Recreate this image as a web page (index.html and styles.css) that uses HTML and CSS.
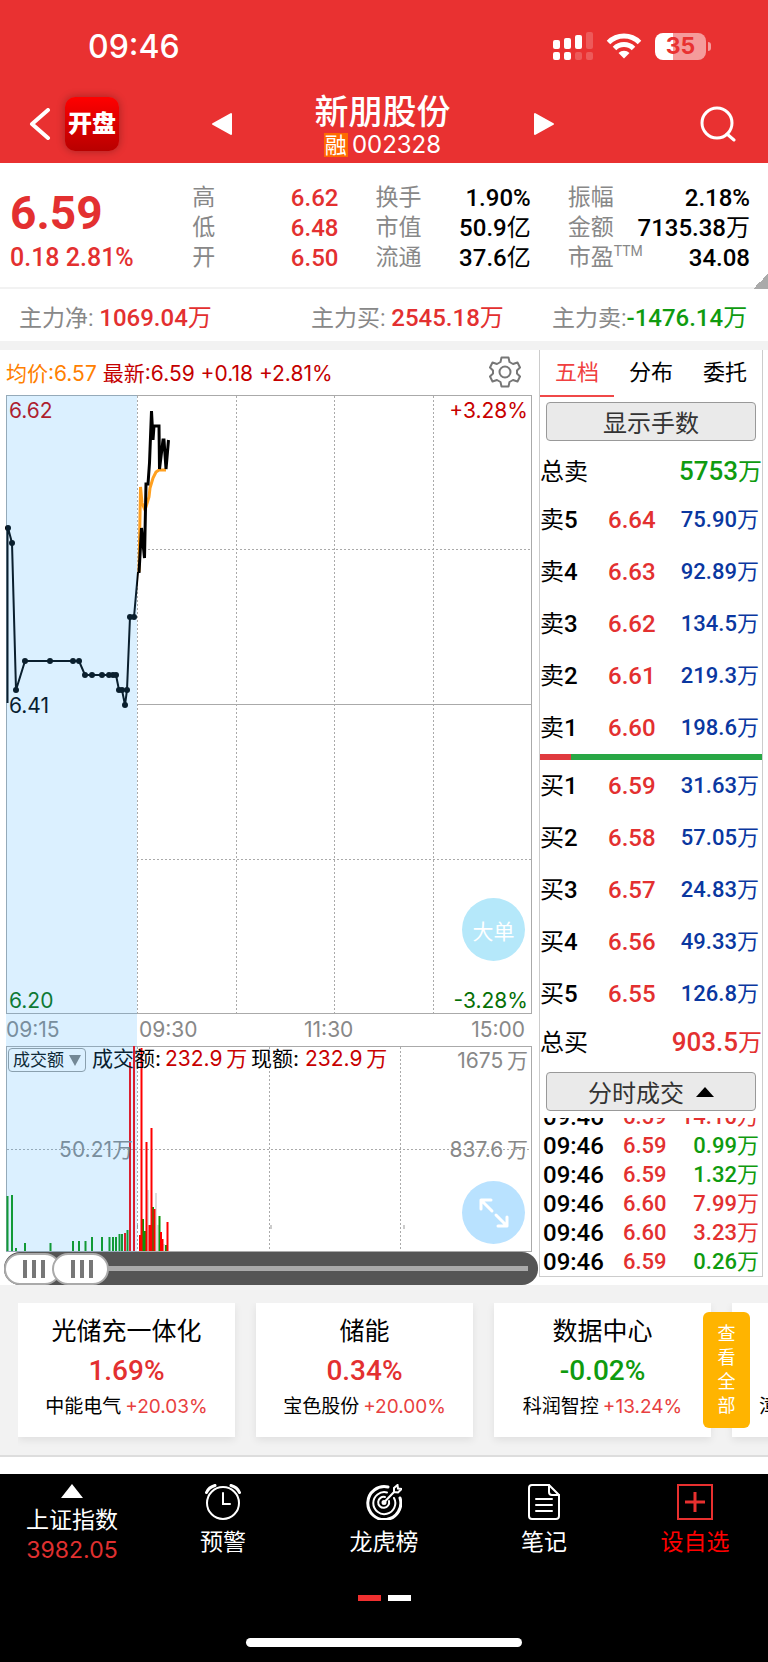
FILE: index.html
```html
<!DOCTYPE html>
<html lang="zh-CN">
<head>
  <meta charset="UTF-8">
  <meta name="viewport" content="width=device-width, initial-scale=1.0">
  <title>新朋股份 002328</title>
  <link rel="stylesheet" href="styles.css">
</head>
<body>
  <header class="top">
    <div class="status-bar">
      <span class="clock">09:46</span>
      <div class="status-icons">
        <svg width="40" height="28" viewBox="0 0 40 28" fill="#fff">
          <rect x="0" y="8" width="7" height="9" rx="2"/>
          <rect x="11" y="6" width="7" height="11" rx="2"/>
          <rect x="22" y="3" width="7" height="14" rx="2"/>
          <rect x="33" y="0" width="7" height="17" rx="2" opacity=".2"/>
          <rect x="0" y="20" width="7" height="8" rx="2"/>
          <rect x="11" y="20" width="7" height="8" rx="2"/>
          <rect x="22" y="20" width="7" height="8" rx="2" opacity=".2"/>
          <rect x="33" y="20" width="7" height="8" rx="2" opacity=".2"/>
        </svg>
        <svg width="36" height="26" viewBox="0 0 36 26" fill="none" stroke="#fff" stroke-width="5">
          <path d="M2.500 9.500a22 22 0 0 1 31 0"/>
          <path d="M8.500 15.500a13.500 13.500 0 0 1 19 0"/>
          <path d="M18 25.500l-5.500-5.500a8 8 0 0 1 11 0z" fill="#fff" stroke="none"/>
        </svg>
        <div class="battery"><span>35</span></div>
      </div>
    </div>
    <div class="title-bar">
      <div class="title-left">
        <a href="#" class="icon-link" aria-label="返回">
          <svg width="22" height="32" viewBox="0 0 22 32" fill="none" stroke="#fff" stroke-width="4" stroke-linecap="round" stroke-linejoin="round"><path d="M19 2L3 16l16 14"/></svg>
        </a>
        <a href="#" class="app-logo">开盘</a>
      </div>
      <div class="stock-switch">
        <button type="button" class="icon-btn" aria-label="上一只">
          <svg width="22" height="24" viewBox="0 0 22 24" fill="#fff" stroke="#fff" stroke-width="2" stroke-linejoin="round"><path d="M20 2v20L2 12z"/></svg>
        </button>
        <div class="stock-name">
          <h1>新朋股份</h1>
          <p><span class="tag">融</span>002328</p>
        </div>
        <button type="button" class="icon-btn" aria-label="下一只">
          <svg width="22" height="24" viewBox="0 0 22 24" fill="#fff" stroke="#fff" stroke-width="2" stroke-linejoin="round"><path d="M2 2v20l18-10z"/></svg>
        </button>
      </div>
      <button type="button" class="icon-btn search" aria-label="搜索">
        <svg width="36" height="36" viewBox="0 0 36 36" fill="none" stroke="#fff" stroke-width="3" stroke-linecap="round"><circle cx="17" cy="17" r="15"/><path d="M27 28l7 6"/></svg>
      </button>
    </div>
  </header>

  <section class="quote">
    <div class="price">
      <strong>6.59</strong>
      <span>0.18 2.81%</span>
    </div>
    <dl class="stats up">
      <div><dt>高</dt><dd>6.62</dd></div>
      <div><dt>低</dt><dd>6.48</dd></div>
      <div><dt>开</dt><dd>6.50</dd></div>
    </dl>
    <dl class="stats">
      <div><dt>换手</dt><dd>1.90%</dd></div>
      <div><dt>市值</dt><dd>50.9<i>亿</i></dd></div>
      <div><dt>流通</dt><dd>37.6<i>亿</i></dd></div>
    </dl>
    <dl class="stats">
      <div><dt>振幅</dt><dd>2.18%</dd></div>
      <div><dt>金额</dt><dd>7135.38<i>万</i></dd></div>
      <div><dt>市盈<sup>TTM</sup></dt><dd>34.08</dd></div>
    </dl>
    <span class="corner"></span>
  </section>

  <section class="funds">
    <p>主力净: <b class="up">1069.04<i>万</i></b></p>
    <p>主力买: <b class="up">2545.18<i>万</i></b></p>
    <p>主力卖:<b class="down">-1476.14<i>万</i></b></p>
  </section>

  <main class="board">
    <div class="charts">
      <div class="legend">
        <span class="avg">均价:6.57</span>
        <span class="last">最新:6.59 +0.18 +2.81%</span>
        <button type="button" class="icon-btn gear" aria-label="设置">
          <svg width="32" height="32" viewBox="0 0 32 32" fill="none" stroke="#777" stroke-width="2" stroke-linejoin="round">
            <path d="M12.500 1.500h7l1 4.500 3.500 2 4.500-1.500 2.500 5-3 3v3l3 3-2.500 5-4.500-1.500-3.500 2-1 4.500h-7l-1-4.500-3.500-2-4.500 1.500-2.500-5 3-3v-3l-3-3 2.500-5 4.500 1.500 3.500-2z"/>
            <circle cx="16" cy="16" r="5.500"/>
          </svg>
        </button>
      </div>

      <div class="chart-area">
        <svg class="chart" viewBox="0 0 539 858">
          <!-- price grid -->
          <g class="frame">
            <rect x="6.500" y="1.500" width="525" height="618"/>
            <path d="M137 310.500H531"/>
            <rect x="6.500" y="652.500" width="525" height="205"/>
          </g>
          <g class="dots">
            <path d="M137.500 2V619M236.500 2V619M334.500 2V619M433.500 2V619"/>
            <path d="M148 155.500H531M137 465.500H531"/>
            <path d="M137.500 653V857M269.500 653V857M400.500 653V857M7 755.500H531"/>
          </g>
          <path class="tick" d="M137.500 831v4M271 831v4M404 831v4"/>

          <!-- volume bars -->
          <path class="bar green" d="M7.500 857V802M12 857V801M16 857V854M25 857V849M50.500 857V849M73 857V847M79 857V847M85.500 857V847M92 857V843M102 857V843M109.500 857V843M113 857V843M116 857V843M119.500 857V840M122 857V840M127.500 857V836"/>
          <path class="bar red" d="M125 857V839M130 857V668M134 857V652"/>
          <path class="bar grey" d="M148 857V796M156 857V799M158 857V831M164 857V850"/>
          <path class="bar green" d="M143 857V825M145 857V837M153 857V813M159.500 857V822M166 857V851"/>
          <path class="bar red" d="M140 857V841M141.500 857V654M146.500 857V748M149.500 857V831M151.500 857V734M154.500 857V815M161 857V838M162.500 857V845M167.500 857V828"/>

          <!-- call auction line -->
          <path class="line" d="M7.500 309V132L12 149l4 147 9-29h54l6 14h31l3 15h3l3 15 2-15 3-73h4l4-45"/>
          <g class="knots">
            <circle cx="8" cy="134" r="3"/><circle cx="12" cy="149" r="3"/><circle cx="16" cy="296" r="3"/>
            <circle cx="25" cy="267" r="3"/><circle cx="50" cy="267" r="3"/><circle cx="73" cy="267" r="3"/><circle cx="79" cy="267" r="3"/>
            <circle cx="85" cy="281" r="3"/><circle cx="92" cy="281" r="3"/><circle cx="102" cy="281" r="3"/><circle cx="109" cy="281" r="3"/><circle cx="113" cy="281" r="3"/><circle cx="116" cy="281" r="3"/>
            <circle cx="119" cy="296" r="3"/><circle cx="122" cy="296" r="3"/><circle cx="125" cy="311" r="3"/><circle cx="127" cy="296" r="3"/>
            <circle cx="130" cy="223" r="3"/><circle cx="134" cy="223" r="3"/>
          </g>

          <!-- trading session: average, then price -->
          <path class="avg-line" d="M139 178L140.500 93 142 109l3 7 4-13 1-9 3-10 3-6 3-2h7"/>
          <path class="price-line" d="M139 179L141.500 134 144.500 164 146 90h2l1.500-21L151.500 17 153 46l1-14h5l.500 43L163 46h1l2 29 2.500-29"/>

          <g class="labels">
            <text x="9" y="24" class="t-red">6.62</text>
            <text x="9" y="319" class="t-black">6.41</text>
            <text x="9" y="614" class="t-green">6.20</text>
            <text x="528" y="24" text-anchor="end" class="t-red">+3.28%</text>
            <text x="528" y="614" text-anchor="end" class="t-green">-3.28%</text>
            <text x="6" y="643">09:15</text>
            <text x="139" y="643">09:30</text>
            <text x="304" y="643">11:30</text>
            <text x="525" y="643" text-anchor="end">15:00</text>
            <text x="92" y="672" class="t-black">成交额:</text>
            <text x="165" y="672" class="t-red">232.9&#8201;万</text>
            <text x="251" y="672" class="t-black">现额:</text>
            <text x="305" y="672" class="t-red">232.9&#8201;万</text>
            <text x="528" y="674" text-anchor="end">1675&#8201;万</text>
            <text x="528" y="763" text-anchor="end">837.6&#8201;万</text>
            <text x="133" y="763" text-anchor="end">50.21万</text>
          </g>
          <rect class="auction" x="6" y="1" width="131" height="857"/>
        </svg>
        <label class="indicator">
          <select aria-label="指标"><option>成交额</option></select>
        </label>
        <button type="button" class="float-btn big-order">大单</button>
        <button type="button" class="float-btn expand" aria-label="全屏">
          <svg width="32" height="32" viewBox="0 0 32 32" fill="none" stroke="#fff" stroke-width="3" stroke-linecap="round" stroke-linejoin="round"><path d="M14 14L3 3M3 12V3h10M18 18l11 11M20 29h9v-9"/></svg>
        </button>
      </div>

      <div class="range">
        <span class="range-track"></span>
        <input type="range" min="0" max="100" value="0" aria-label="起始时间">
        <input type="range" min="0" max="100" value="10" aria-label="结束时间">
      </div>
    </div>

    <aside class="panel">
      <nav class="tabs">
        <a href="#" class="active">五档</a>
        <a href="#">分布</a>
        <a href="#">委托</a>
      </nav>
      <button type="button" class="panel-btn">显示手数</button>
      <p class="total sell"><span>总卖</span><b class="down">5753<i>万</i></b></p>
      <table class="depth">
        <tr><th>卖<b>5</b></th><td>6.64</td><td class="vol">75.90<i>万</i></td></tr>
        <tr><th>卖<b>4</b></th><td>6.63</td><td class="vol">92.89<i>万</i></td></tr>
        <tr><th>卖<b>3</b></th><td>6.62</td><td class="vol">134.5<i>万</i></td></tr>
        <tr><th>卖<b>2</b></th><td>6.61</td><td class="vol">219.3<i>万</i></td></tr>
        <tr><th>卖<b>1</b></th><td>6.60</td><td class="vol">198.6<i>万</i></td></tr>
      </table>
      <div class="ratio"><span style="width: 14%"></span></div>
      <table class="depth">
        <tr><th>买<b>1</b></th><td>6.59</td><td class="vol">31.63<i>万</i></td></tr>
        <tr><th>买<b>2</b></th><td>6.58</td><td class="vol">57.05<i>万</i></td></tr>
        <tr><th>买<b>3</b></th><td>6.57</td><td class="vol">24.83<i>万</i></td></tr>
        <tr><th>买<b>4</b></th><td>6.56</td><td class="vol">49.33<i>万</i></td></tr>
        <tr><th>买<b>5</b></th><td>6.55</td><td class="vol">126.8<i>万</i></td></tr>
      </table>
      <p class="total"><span>总买</span><b class="up">903.5<i>万</i></b></p>
      <button type="button" class="panel-btn">分时成交
        <svg width="18" height="10" viewBox="0 0 18 10"><path d="M9 0l9 10H0z"/></svg>
      </button>
      <div class="deals">
        <table>
          <tr><th>09:46</th><td>6.59</td><td class="up">14.10<i>万</i></td></tr>
          <tr><th>09:46</th><td>6.59</td><td class="down">0.99<i>万</i></td></tr>
          <tr><th>09:46</th><td>6.59</td><td class="down">1.32<i>万</i></td></tr>
          <tr><th>09:46</th><td>6.60</td><td class="up">7.99<i>万</i></td></tr>
          <tr><th>09:46</th><td>6.60</td><td class="up">3.23<i>万</i></td></tr>
          <tr><th>09:46</th><td>6.59</td><td class="down">0.26<i>万</i></td></tr>
        </table>
      </div>
    </aside>
  </main>

  <section class="themes">
    <div class="theme-list">
      <article class="card">
        <h2>光储充一体化</h2>
        <b class="up">1.69%</b>
        <p>中能电气<span>+20.03%</span></p>
      </article>
      <article class="card">
        <h2>储能</h2>
        <b class="up">0.34%</b>
        <p>宝色股份<span>+20.00%</span></p>
      </article>
      <article class="card">
        <h2>数据中心</h2>
        <b class="down">-0.02%</b>
        <p>科润智控<span>+13.24%</span></p>
      </article>
      <article class="card cut">
        <p>漳</p>
      </article>
    </div>
    <button type="button" class="view-all">查看全部</button>
  </section>

  <footer class="bottom">
    <nav class="menu">
      <a href="#" class="index">
        <svg width="22" height="14" viewBox="0 0 22 14" fill="#fff"><path d="M11 0l11 14H0z"/></svg>
        <span>上证指数</span>
        <span class="index-value">3982.05</span>
      </a>
      <a href="#">
        <svg width="36" height="36" viewBox="0 0 36 36" fill="none" stroke="#fff" stroke-width="2" stroke-linecap="round">
          <circle cx="18" cy="19" r="16"/>
          <path d="M18 9v11h7"/>
          <path d="M1.500 8.500C3 5 6 2.500 10 1.500M34.500 8.500C33 5 30 2.500 26 1.500" stroke-width="3"/>
        </svg>
        <span>预警</span>
      </a>
      <a href="#">
        <svg width="36" height="36" viewBox="0 0 36 36" fill="none" stroke="#fff" stroke-width="2" stroke-linecap="round">
          <path d="M22 3A16.500 16.500 0 1 0 34 14" stroke-width="3"/>
          <path d="M21 8.500A11 11 0 1 0 28 14"/>
          <path d="M19 13a5.500 5.500 0 1 0 4 4"/>
          <path d="M18 18.500L28 8M28 8V4l3.500-3 .500 3.500 3.500.500L32 8.500z"/>
          <circle cx="18" cy="18.500" r="1.500" fill="#fff"/>
        </svg>
        <span>龙虎榜</span>
      </a>
      <a href="#">
        <svg width="32" height="36" viewBox="0 0 32 36" fill="none" stroke="#fff" stroke-width="2" stroke-linecap="round" stroke-linejoin="round">
          <path d="M4 1h17l10 10v21a3 3 0 0 1-3 3H4a3 3 0 0 1-3-3V4a3 3 0 0 1 3-3z"/>
          <path d="M21 1v7a3 3 0 0 0 3 3h7M8 15h16M8 21h16M8 27h16"/>
        </svg>
        <span>笔记</span>
      </a>
      <a href="#" class="add">
        <svg width="36" height="36" viewBox="0 0 36 36" fill="none" stroke="#e8302f" stroke-width="2"><rect x="1" y="1" width="34" height="34"/><path d="M18 8v20M8 18h20" stroke-width="3"/></svg>
        <span>设自选</span>
      </a>
    </nav>
    <div class="pager"><span class="on"></span><span></span></div>
    <div class="home-bar"></div>
  </footer>
</body>
</html>
```

FILE: styles.css
```css
* {
  box-sizing: border-box;
}

body {
  margin: 0;
  background-color: #fff;
  color: #000;
  font-family: Inter, "Noto Sans CJK SC", sans-serif;
  font-size: 22px;
}

h1, h2, p, dl, dd {
  margin: 0;
  font-weight: 400;
}

a {
  color: inherit;
  text-decoration: none;
}

button {
  padding: 0;
  border: none;
  background: none;
  font-family: inherit;
  cursor: pointer;
}

svg {
  display: block;
}

i {
  font-style: normal;
  font-weight: 400;
}

.up {
  color: #e33030;
}

.down {
  color: #0f9b0f;
}

.icon-btn, .icon-link {
  display: flex;
  align-items: center;
}

/* header */
.top {
  height: 163px;
  background-color: #e93131;
  color: #fff;
}

.status-bar {
  display: flex;
  justify-content: space-between;
  align-items: center;
  height: 88px;
  padding: 4px 62px 0 88px;
}

.clock {
  font-size: 32px;
  font-weight: 500;
}

.status-icons {
  display: flex;
  align-items: center;
  gap: 13px;
}

.battery {
  position: relative;
  width: 51px;
  height: 27px;
  border-radius: 8px;
  background: linear-gradient(to right, #fff 35%, #f59b9b 35%);
  color: #e93131;
  font-size: 23px;
  font-weight: 700;
  line-height: 27px;
  text-align: center;
}

.battery::after {
  content: "";
  position: absolute;
  right: -5px;
  top: 9px;
  width: 3px;
  height: 9px;
  border-radius: 0 3px 3px 0;
  background-color: #f59b9b;
}

.title-bar {
  display: grid;
  grid-template-columns: 1fr auto 1fr;
  align-items: center;
  height: 72px;
  padding: 0 32px 0 29px;
}

.title-left {
  display: flex;
  align-items: center;
  gap: 14px;
}

.app-logo {
  width: 54px;
  height: 54px;
  border-radius: 10px;
  background: linear-gradient(#f00, #b80000);
  box-shadow: 0 0 8px rgba(0, 0, 0, 0.3);
  font-size: 24px;
  font-weight: 900;
  line-height: 54px;
  text-align: center;
}

.stock-switch {
  display: flex;
  align-items: center;
  gap: 82px;
}

.stock-name {
  padding-top: 6px;
  text-align: center;
}

.stock-name h1 {
  font-size: 34px;
  font-weight: 500;
  line-height: 36px;
}

.stock-name p {
  display: flex;
  justify-content: center;
  align-items: center;
  gap: 4px;
  font-size: 24px;
  line-height: 30px;
}

.tag {
  width: 24px;
  background-color: #ff6a00;
  font-size: 22px;
  line-height: 24px;
}

.search {
  justify-self: end;
}

/* quote */
.quote, .funds, .panel b, .depth, .deals, .card b {
  font-family: Roboto, "Noto Sans CJK SC", sans-serif;
}

.quote {
  position: relative;
  display: grid;
  grid-template-columns: 145fr 146fr 155fr 182fr;
  gap: 37px;
  height: 126px;
  padding: 20px 18px 0 10px;
  border-bottom: 2px solid #f2f2f2;
}

.price {
  color: #e33030;
  white-space: nowrap;
}

.price strong {
  display: block;
  font-size: 46px;
  line-height: 60px;
}

.price span {
  font-size: 25px;
  font-weight: 500;
  line-height: 30px;
}

.stats div {
  display: flex;
  justify-content: space-between;
  font-size: 24px;
  line-height: 30px;
  white-space: nowrap;
}

.stats dt {
  color: #888;
  font-size: 23px;
}

.stats dd {
  font-weight: 500;
}

.stats sup {
  font-size: 14px;
  line-height: 14px;
  vertical-align: 9px;
}

.corner {
  position: absolute;
  right: 0;
  bottom: -2px;
  width: 15px;
  height: 15px;
  background: linear-gradient(135deg, transparent 50%, #aaa 50%);
}

.funds {
  display: grid;
  grid-template-columns: 40% 33% 1fr;
  align-items: center;
  height: 61px;
  padding: 0 19px;
  border-bottom: 9px solid #f2f2f2;
  color: #888;
  font-size: 23px;
  white-space: nowrap;
}

.funds b {
  font-size: 24px;
  font-weight: 500;
}

/* charts */
.board {
  display: grid;
  grid-template-columns: minmax(0, 1fr) 224px;
  align-items: start;
  padding-right: 5px;
}

.legend {
  display: flex;
  align-items: center;
  gap: 6px;
  height: 44px;
  padding: 0 18px 0 6px;
  font-size: 21px;
}

.avg {
  color: #ff8000;
}

.last {
  color: #c40000;
}

.gear {
  margin-left: auto;
}

.chart-area {
  position: relative;
}

.chart {
  width: 100%;
  height: auto;
}

.frame {
  fill: none;
  stroke: #aaa;
}

.dots {
  fill: none;
  stroke: #aaa;
  stroke-dasharray: 2 2;
}

.tick {
  stroke: #999;
}

.bar {
  stroke-width: 2;
}

.green {
  stroke: #0a960a;
}

.red {
  stroke: #f00;
}

.grey {
  stroke: #ddd;
}

.line {
  fill: none;
  stroke: #000;
  stroke-width: 2;
}

.avg-line {
  fill: none;
  stroke: #ffa020;
  stroke-width: 3;
}

.price-line {
  fill: none;
  stroke: #000;
  stroke-width: 3;
}

.labels {
  fill: #888;
  font-size: 21px;
}

.t-red {
  fill: #c80000;
}

.t-green {
  fill: #067006;
}

.t-black {
  fill: #000;
}

.auction {
  fill: rgba(55, 172, 255, 0.18);
}

.indicator {
  position: absolute;
  left: 8px;
  top: 654px;
}

.indicator select {
  display: block;
  width: 78px;
  height: 24px;
  padding: 0 4px;
  border: 1px solid #8aa0ae;
  border-radius: 4px;
  appearance: none;
  background: none;
  color: #0f2a38;
  font-family: inherit;
  font-size: 17px;
  line-height: 22px;
}

.indicator::after {
  content: "";
  position: absolute;
  right: 5px;
  top: 7px;
  border: 6px solid transparent;
  border-top: 11px solid #738896;
  border-bottom: none;
}

.float-btn {
  position: absolute;
  right: 14px;
  display: flex;
  justify-content: center;
  align-items: center;
  width: 63px;
  height: 63px;
  border-radius: 50%;
  color: #fff;
  font-size: 21px;
}

.big-order {
  top: 504px;
  background-color: #b5e8fa;
}

.expand {
  bottom: 8px;
  background-color: #b9e2ff;
}

.range {
  position: relative;
  height: 33px;
  margin: 0 1px 0 4px;
  padding: 14px 10px 0;
  border-radius: 16px;
  background-color: #555;
}

.range-track {
  display: block;
  height: 5px;
  background-color: #aaa;
}

.range input {
  position: absolute;
  left: 0;
  top: 0;
  width: 100%;
  height: 33px;
  margin: 0;
  appearance: none;
  background: none;
  pointer-events: none;
}

.range input::-webkit-slider-thumb {
  width: 57px;
  height: 32px;
  border: 2px solid #aaa;
  border-radius: 16px;
  appearance: none;
  background:
    linear-gradient(#777, #777) 17px 5px / 4px 18px no-repeat,
    linear-gradient(#777, #777) 26px 5px / 4px 18px no-repeat,
    linear-gradient(#777, #777) 35px 5px / 4px 18px no-repeat,
    #fff;
  pointer-events: auto;
}

/* order book */
.panel {
  display: flex;
  flex-direction: column;
  border: 1px solid #ccc;
  border-top: none;
}

.tabs {
  display: grid;
  grid-template-columns: repeat(3, 1fr);
  height: 45px;
  text-align: center;
  line-height: 45px;
}

.tabs .active {
  border-bottom: 2px solid #f04848;
  color: #f04040;
}

.panel-btn {
  display: flex;
  justify-content: center;
  align-items: center;
  gap: 12px;
  height: 39px;
  margin: 7px 6px 0;
  border: 1px solid #999;
  border-radius: 4px;
  background-color: #eaeaea;
  color: #333;
  font-size: 24px;
}

.total {
  display: flex;
  justify-content: space-between;
  align-items: center;
  height: 45px;
  font-size: 24px;
  line-height: 30px;
}

.sell {
  height: 53px;
  padding-top: 8px;
}

.total b {
  font-size: 26px;
  font-weight: 500;
}

.total i {
  font-size: 24px;
}

.depth {
  width: 100%;
  border-collapse: collapse;
}

.depth th, .depth td {
  height: 52px;
  padding: 0;
  color: #e33030;
  font-size: 24px;
  font-weight: 500;
  line-height: 30px;
  text-align: left;
}

.depth th {
  width: 68px;
  color: #000;
  font-weight: 400;
}

.depth th b {
  font-weight: 500;
}

.depth .vol {
  padding-right: 3px;
  color: #0a37a0;
  font-size: 22px;
  text-align: right;
}

.ratio {
  height: 6px;
  background-color: #28a745;
}

.ratio span {
  display: block;
  height: 6px;
  background-color: #e03a3e;
}

.deals {
  display: flex;
  flex-direction: column;
  justify-content: flex-end;
  height: 158px;
  margin-top: 7px;
  overflow: hidden;
}

.deals table {
  width: 100%;
  border-collapse: collapse;
}

.deals th, .deals td {
  height: 29px;
  padding: 0;
  color: #e33030;
  font-size: 22px;
  font-weight: 500;
  line-height: 28px;
  text-align: left;
}

.deals th {
  width: 83px;
  padding-left: 3px;
  color: #000;
  font-size: 24px;
}

.deals .up, .deals .down {
  padding-right: 3px;
  text-align: right;
}

.deals .down {
  color: #0f9b0f;
}

/* themes */
.themes {
  position: relative;
  height: 172px;
  padding: 18px 0 0 18px;
  border-bottom: 2px solid #ddd;
  background-color: #f2f2f2;
}

.theme-list {
  display: flex;
  gap: 21px;
  overflow: hidden;
  padding-bottom: 16px;
}

.card {
  flex: none;
  display: flex;
  flex-direction: column;
  align-items: center;
  width: 217px;
  height: 134px;
  padding-top: 10px;
  background-color: #fff;
  box-shadow: 0 3px 8px rgba(0, 0, 0, 0.08);
}

.card h2 {
  font-size: 25px;
  line-height: 36px;
}

.card b {
  font-size: 28px;
  font-weight: 500;
  line-height: 44px;
}

.card p {
  font-size: 19px;
  line-height: 28px;
}

.card span {
  margin-left: 4px;
  color: #e84040;
}

.cut {
  align-items: flex-start;
  padding: 90px 0 0 27px;
}

.view-all {
  position: absolute;
  right: 18px;
  top: 27px;
  width: 47px;
  height: 116px;
  padding: 0 14px;
  border-radius: 6px;
  background-color: #ffb400;
  color: #fff;
  font-size: 18px;
  line-height: 24px;
}

/* bottom menu */
.bottom {
  display: flex;
  flex-direction: column;
  align-items: center;
  height: 188px;
  margin-top: 17px;
  background-color: #000;
  color: #fff;
}

.menu {
  display: grid;
  grid-template-columns: 144fr 158fr 164fr 156fr 146fr;
  width: 100%;
  height: 121px;
  padding-top: 10px;
  font-size: 23px;
}

.menu a {
  display: flex;
  flex-direction: column;
  align-items: center;
  gap: 7px;
  line-height: 30px;
}

.menu .index {
  gap: 0;
}

.index svg {
  margin-bottom: 7px;
}

.index-value {
  color: #e03030;
}

.add {
  color: #f00;
}

.pager {
  display: flex;
  gap: 7px;
}

.pager span {
  width: 23px;
  height: 6px;
  background-color: #fff;
}

.pager .on {
  background-color: #f03030;
}

.home-bar {
  width: 36%;
  height: 9px;
  margin-top: 37px;
  border-radius: 5px;
  background-color: #fff;
}
```
